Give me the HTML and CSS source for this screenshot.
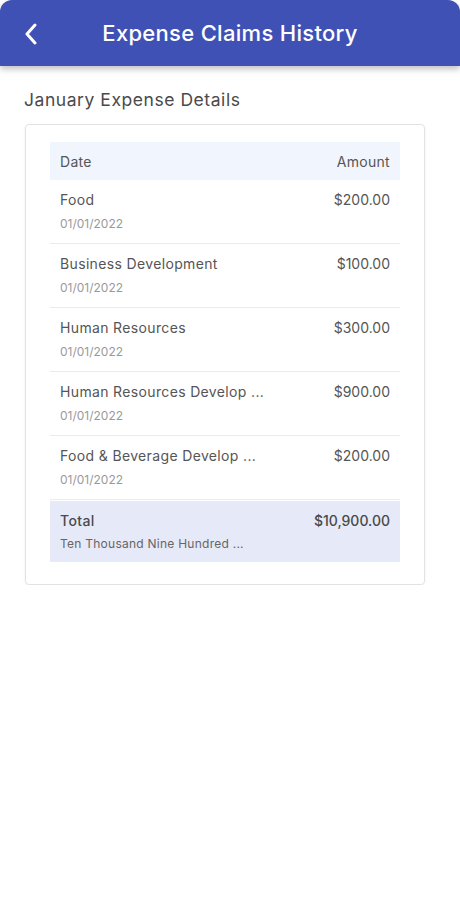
FILE: index.html
```html
<!DOCTYPE html>
<html lang="en">
<head>
    <meta charset="UTF-8">
    <meta name="viewport" content="width=device-width, initial-scale=1.0">
    <title>Expense Claims History</title>
    <link rel="stylesheet" href="styles.css">
</head>
<body>
    <header class="topbar">
        <button class="back" aria-label="Back">
            <svg width="14" height="22" viewBox="0 0 14 22">
                <path d="M11 2 L3 11 L11 20" fill="none" stroke="#fff" stroke-width="3" stroke-linecap="round" stroke-linejoin="round"/>
            </svg>
        </button>
        <h1>Expense Claims History</h1>
    </header>

    <main class="content">
        <h2 class="section-title">January Expense Details</h2>

        <div class="card">
            <div class="table">
                <div class="table-head">
                    <span>Date</span>
                    <span>Amount</span>
                </div>

                <div class="row">
                    <div class="row-info">
                        <div class="row-name">Food</div>
                        <div class="row-date">01/01/2022</div>
                    </div>
                    <div class="row-amount">$200.00</div>
                </div>
                <div class="row">
                    <div class="row-info">
                        <div class="row-name">Business Development</div>
                        <div class="row-date">01/01/2022</div>
                    </div>
                    <div class="row-amount">$100.00</div>
                </div>
                <div class="row">
                    <div class="row-info">
                        <div class="row-name">Human Resources</div>
                        <div class="row-date">01/01/2022</div>
                    </div>
                    <div class="row-amount">$300.00</div>
                </div>
                <div class="row">
                    <div class="row-info">
                        <div class="row-name">Human Resources Develop ...</div>
                        <div class="row-date">01/01/2022</div>
                    </div>
                    <div class="row-amount">$900.00</div>
                </div>
                <div class="row">
                    <div class="row-info">
                        <div class="row-name">Food &amp; Beverage Develop ...</div>
                        <div class="row-date">01/01/2022</div>
                    </div>
                    <div class="row-amount">$200.00</div>
                </div>

                <div class="row total">
                    <div class="row-info">
                        <div class="row-name">Total</div>
                        <div class="row-words">Ten Thousand Nine Hundred ...</div>
                    </div>
                    <div class="row-amount">$10,900.00</div>
                </div>
            </div>
        </div>
    </main>
</body>
</html>
```

FILE: styles.css
```css
body {
    margin: 0;
    font-family: Inter, "Noto Sans", sans-serif;
    background: #fff;
    color: #555;
}
.topbar {
    height: 66px;
    background: #3f51b5;
    border-radius: 12px 12px 0 0;
    box-shadow: 0 3px 6px rgba(0,0,0,0.25);
    display: flex;
    align-items: center;
    justify-content: center;
    position: relative;
}
.back {
    position: absolute;
    left: 24px;
    top: 23px;
    background: none;
    border: none;
    padding: 0;
    cursor: pointer;
}
.topbar h1 {
    margin: 0;
    color: #fff;
    font-size: 22px;
    font-weight: 500;
    letter-spacing: 0.3px;
}
.content {
    padding: 24px 35px 0 24px;
}
.section-title {
    margin: 0 0 14px;
    font-size: 17.5px;
    font-weight: 400;
    color: #4a4a4a;
    line-height: 20px;
    letter-spacing: 0.55px;
}
.card {
    margin-left: 1px;
    border: 1px solid #e2e2e2;
    border-radius: 4px;
    box-shadow: 0 1px 3px rgba(0,0,0,0.06);
    padding: 17px 24px 22px 24px;
}
.table-head {
    height: 38px;
    background: #f1f5fd;
    display: flex;
    align-items: center;
    justify-content: space-between;
    padding: 0 10px;
    font-size: 14px;
    letter-spacing: 0.3px;
    color: #555;
}
.row {
    display: flex;
    justify-content: space-between;
    height: 63px;
    padding: 0 10px;
    border-bottom: 1px solid #ebebeb;
}
.row-info {
    padding-top: 12px;
}
.row-name {
    font-size: 14px;
    line-height: 16px;
    letter-spacing: 0.35px;
    color: #555;
}
.row-date {
    margin-top: 8px;
    font-size: 12px;
    color: #9a9a9a;
}
.row-amount {
    padding-top: 12px;
    font-size: 14px;
    line-height: 16px;
    color: #555;
}
.row.total {
    background: #e6e9f7;
    border-bottom: none;
    height: 61px;
    margin-top: 1px;
}
.total .row-name,
.total .row-amount {
    font-weight: 500;
    color: #4a4a4a;
}
.row-words {
    margin-top: 7px;
    font-size: 12px;
    letter-spacing: 0.25px;
    color: #666;
}
```
